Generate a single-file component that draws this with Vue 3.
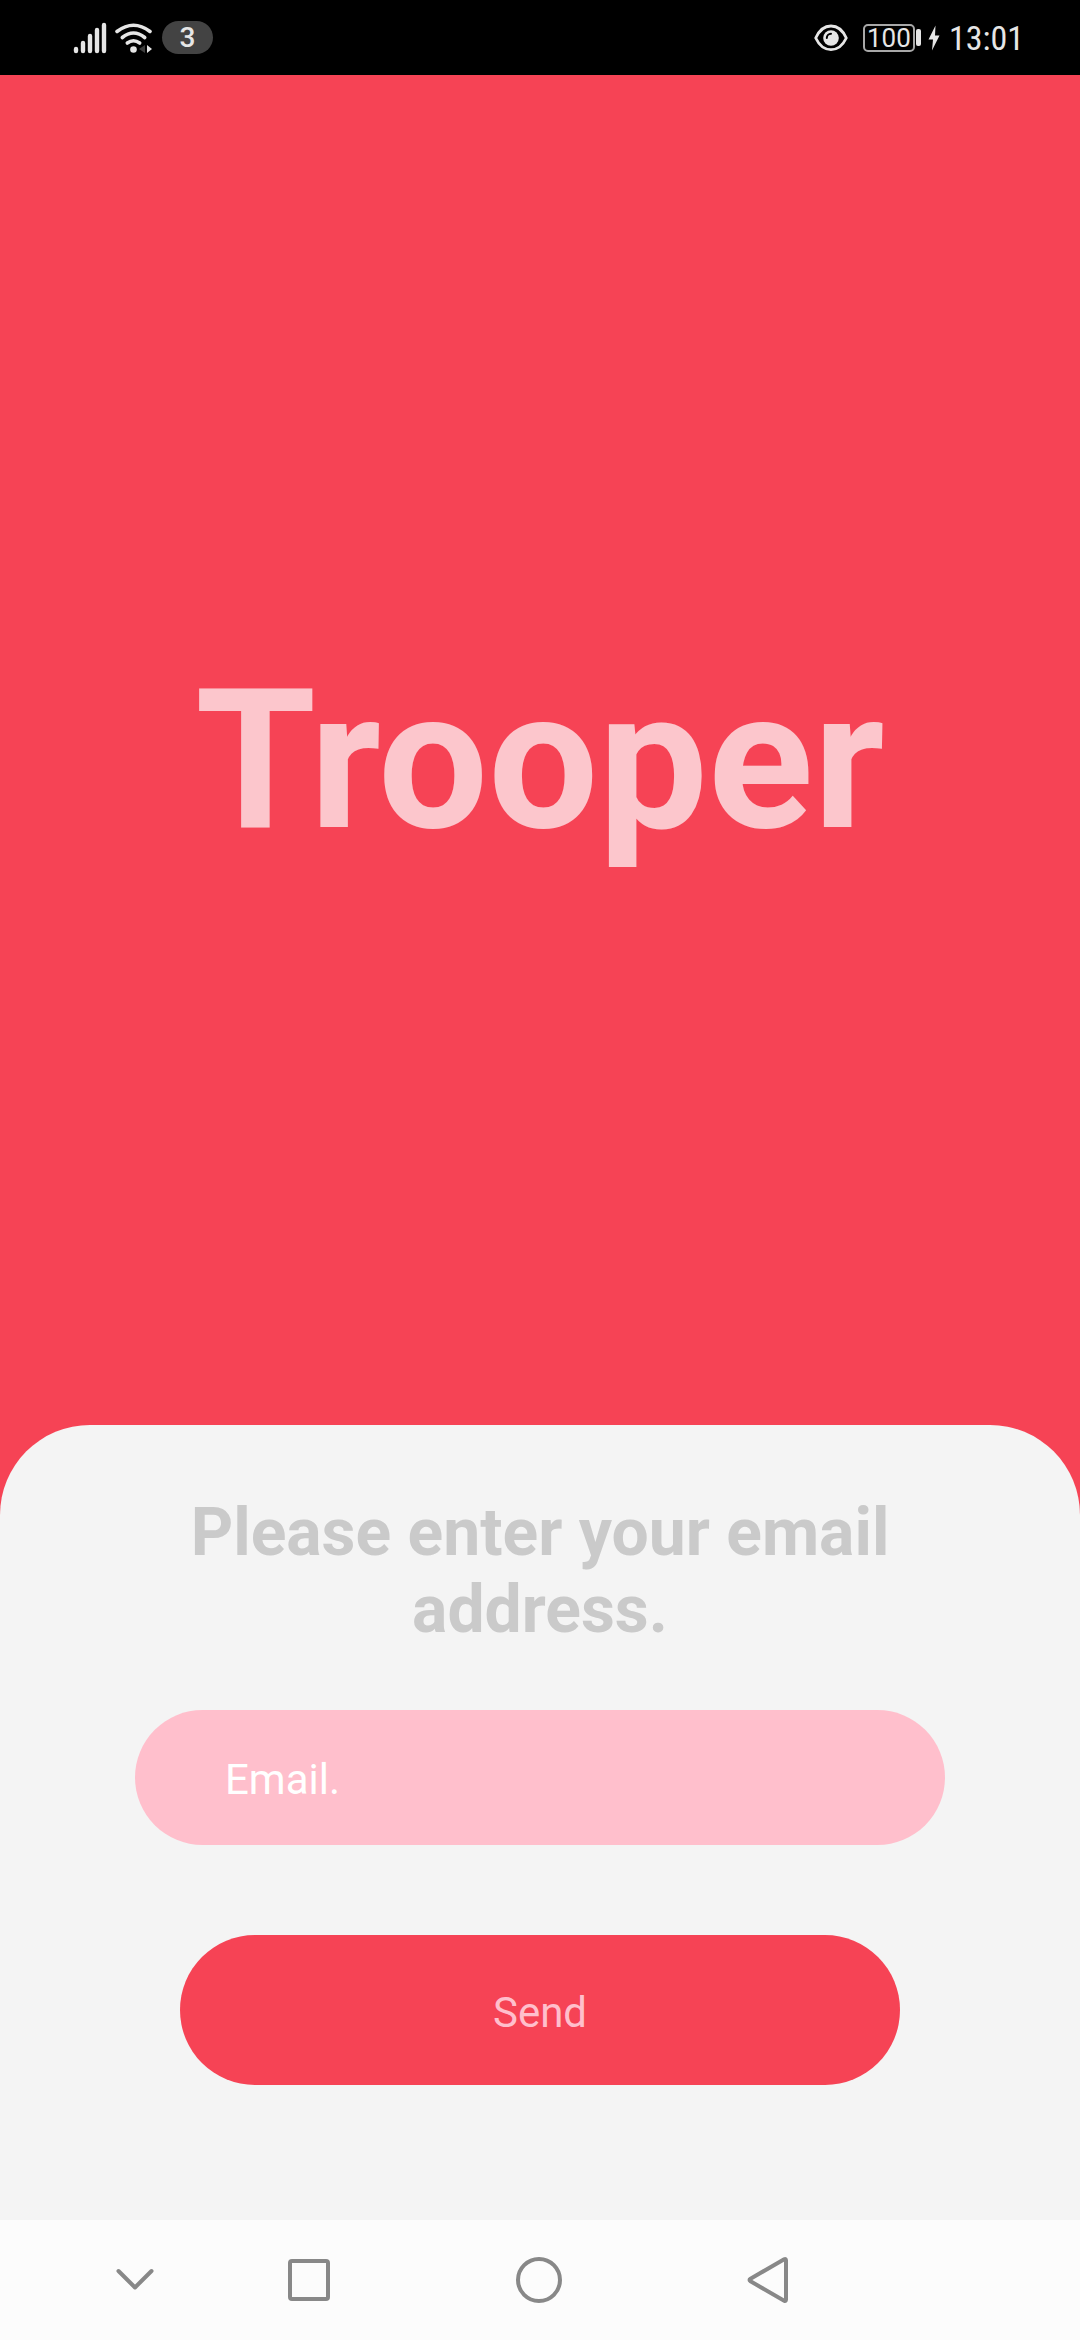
<script setup>
import { ref } from 'vue'

const email = ref('')
const bars = [
  { x: 4, top: 27 },
  { x: 11, top: 21 },
  { x: 18, top: 14 },
  { x: 25, top: 8 },
  { x: 32, top: 3 },
]
</script>

<template>
  <div class="page">
    <header class="status">
      <div class="status-group">
        <svg class="signal" width="36" height="34" viewBox="0 0 36 34" aria-hidden="true">
          <line
            v-for="bar in bars"
            :key="bar.x"
            :x1="bar.x"
            :x2="bar.x"
            :y1="bar.top + 1"
            y2="30"
            stroke="#e6e6e6"
            stroke-width="4.4"
            stroke-linecap="round"
          />
        </svg>
        <svg class="wifi" width="40" height="34" viewBox="0 0 40 34" aria-hidden="true">
          <g fill="none" stroke="#e6e6e6" stroke-width="3.6" stroke-linecap="round">
            <path d="M3 10.5Q19.500 -2 36 10.500" />
            <path d="M8.300 16.500Q19.500 7.500 30.700 16.500" />
            <path d="M13.300 22Q19.500 17.500 25.700 22" />
          </g>
          <circle cx="19.500" cy="28.500" r="3.300" fill="#e6e6e6" />
          <path d="M31 24V32L25 28Z" fill="#3d3d3d" />
          <path d="M33 24L38 28L33 32Z" fill="#e6e6e6" />
        </svg>
        <span class="count">3</span>
      </div>
      <div class="status-group">
        <svg class="eye" width="34" height="28" viewBox="0 0 34 28" aria-hidden="true">
          <path
            d="M1.700 14C9 -2 25 -2 32.300 14C25 29.500 9 29.500 1.700 14Z"
            fill="none"
            stroke="#e6e6e6"
            stroke-width="2.800"
            stroke-linejoin="round"
          />
          <circle cx="17" cy="14" r="7.800" fill="#e6e6e6" />
          <path d="M12.800 14A4.300 4.300 0 0 1 17 9.800" fill="none" stroke="#000" stroke-width="2" stroke-linecap="round" />
        </svg>
        <span class="battery">100</span>
        <span class="nub"></span>
        <svg class="bolt" width="12" height="26" viewBox="0 0 12 26" aria-hidden="true">
          <path d="M7.500 0.500L0.500 14.500H5L4 25.500L11.500 10.500H7Z" fill="#e6e6e6" />
        </svg>
        <time class="clock">13:01</time>
      </div>
    </header>

    <main class="screen">
      <section class="hero">
        <h1 class="brand">Trooper</h1>
      </section>
      <form class="sheet" @submit.prevent>
        <label class="prompt" for="email">Please enter your email address.</label>
        <input id="email" v-model="email" class="field" type="email" placeholder="Email." />
        <button class="send" type="submit">Send</button>
      </form>
    </main>

    <nav class="nav" aria-label="System navigation">
      <button class="key hide" type="button" aria-label="Hide navigation">
        <svg width="48" height="48" viewBox="0 0 48 48">
          <path d="M7.500 15L24 31.500L40.500 15" />
        </svg>
      </button>
      <div class="main-keys">
        <button class="key" type="button" aria-label="Recent apps">
          <svg width="48" height="48" viewBox="0 0 48 48">
            <rect x="5" y="5" width="38" height="38" rx="2" />
          </svg>
        </button>
        <button class="key" type="button" aria-label="Home">
          <svg width="48" height="48" viewBox="0 0 48 48">
            <circle cx="24" cy="24" r="21" />
          </svg>
        </button>
        <button class="key" type="button" aria-label="Back">
          <svg width="48" height="48" viewBox="0 0 48 48">
            <path d="M40.200 3.300Q42 2.300 42 4.500V43.500Q42 45.700 40.200 44.700L6.500 25.300Q4.500 24 6.500 22.700Z" />
          </svg>
        </button>
      </div>
    </nav>
  </div>
</template>

<style>
body {
  margin: 0;
}
</style>

<style scoped>
.page {
  display: flex;
  flex-direction: column;
  min-height: 100vh;
  background: #f64355;
  font-family: Roboto, sans-serif;
}

.status {
  display: flex;
  align-items: center;
  justify-content: space-between;
  box-sizing: border-box;
  height: 75px;
  padding: 0 56px 0 72px;
  background: #000;
  color: #e6e6e6;
}

.status-group {
  display: flex;
  align-items: center;
}

.wifi {
  margin-left: 6px;
}

.count {
  width: 51px;
  margin-left: 8px;
  border-radius: 17px;
  background: #434343;
  font-size: 28px;
  font-weight: 500;
  line-height: 33px;
  text-align: center;
}

.battery {
  box-sizing: border-box;
  width: 52px;
  height: 28px;
  margin-left: 15px;
  border: 2px solid #a8a8a8;
  border-radius: 5px;
  font-size: 26px;
  line-height: 24px;
  text-align: center;
}

.nub {
  width: 5px;
  height: 17px;
  margin-left: 1px;
  border-radius: 2px;
  background: #e6e6e6;
}

.bolt {
  margin: 0 9px 0 7px;
}

.clock {
  font-family: "Roboto Condensed", "Liberation Sans Narrow", Roboto, sans-serif;
  font-size: 34px;
  line-height: 40px;
}

.screen {
  display: flex;
  flex: 1;
  flex-direction: column;
}

.hero {
  display: flex;
  flex: 1;
  align-items: center;
  justify-content: center;
  padding-top: 22px;
}

.brand {
  margin: 0;
  color: #fcc6cc;
  font-size: 195px;
  font-weight: 700;
  line-height: 228px;
}

.sheet {
  display: flex;
  flex-direction: column;
  align-items: center;
  padding: 69px 0 135px;
  border-radius: 90px 90px 0 0;
  background: #f4f4f4;
}

.prompt {
  width: 75%;
  color: #cacaca;
  font-size: 66px;
  font-weight: 700;
  line-height: 77px;
  text-align: center;
}

.field {
  box-sizing: border-box;
  width: 75%;
  height: 135px;
  margin: 62px 0 90px;
  padding: 4px 90px 0;
  border: 0;
  border-radius: 68px;
  outline: 0;
  background: #ffbfcc;
  color: #fff;
  font-family: inherit;
  font-size: 42px;
}

.field::placeholder {
  color: #fff;
  opacity: 1;
}

.send {
  width: calc(100% * 2 / 3);
  height: 150px;
  padding: 5px 0 0;
  border: 0;
  border-radius: 75px;
  background: #f64355;
  color: #ffbfcc;
  font-family: inherit;
  font-size: 42px;
}

.nav {
  display: flex;
  align-items: center;
  height: 120px;
  background: #fcfcfc;
}

.key {
  display: block;
  width: 48px;
  height: 48px;
  padding: 0;
  border: 0;
  background: none;
}

.key svg {
  display: block;
  fill: none;
  stroke: #888;
  stroke-width: 4;
  stroke-linecap: round;
  stroke-linejoin: round;
}

.hide {
  margin-left: calc(12.5% - 24px);
}

.main-keys {
  display: flex;
  justify-content: space-between;
  width: 47%;
  margin-left: calc(16% - 47px);
}
</style>
